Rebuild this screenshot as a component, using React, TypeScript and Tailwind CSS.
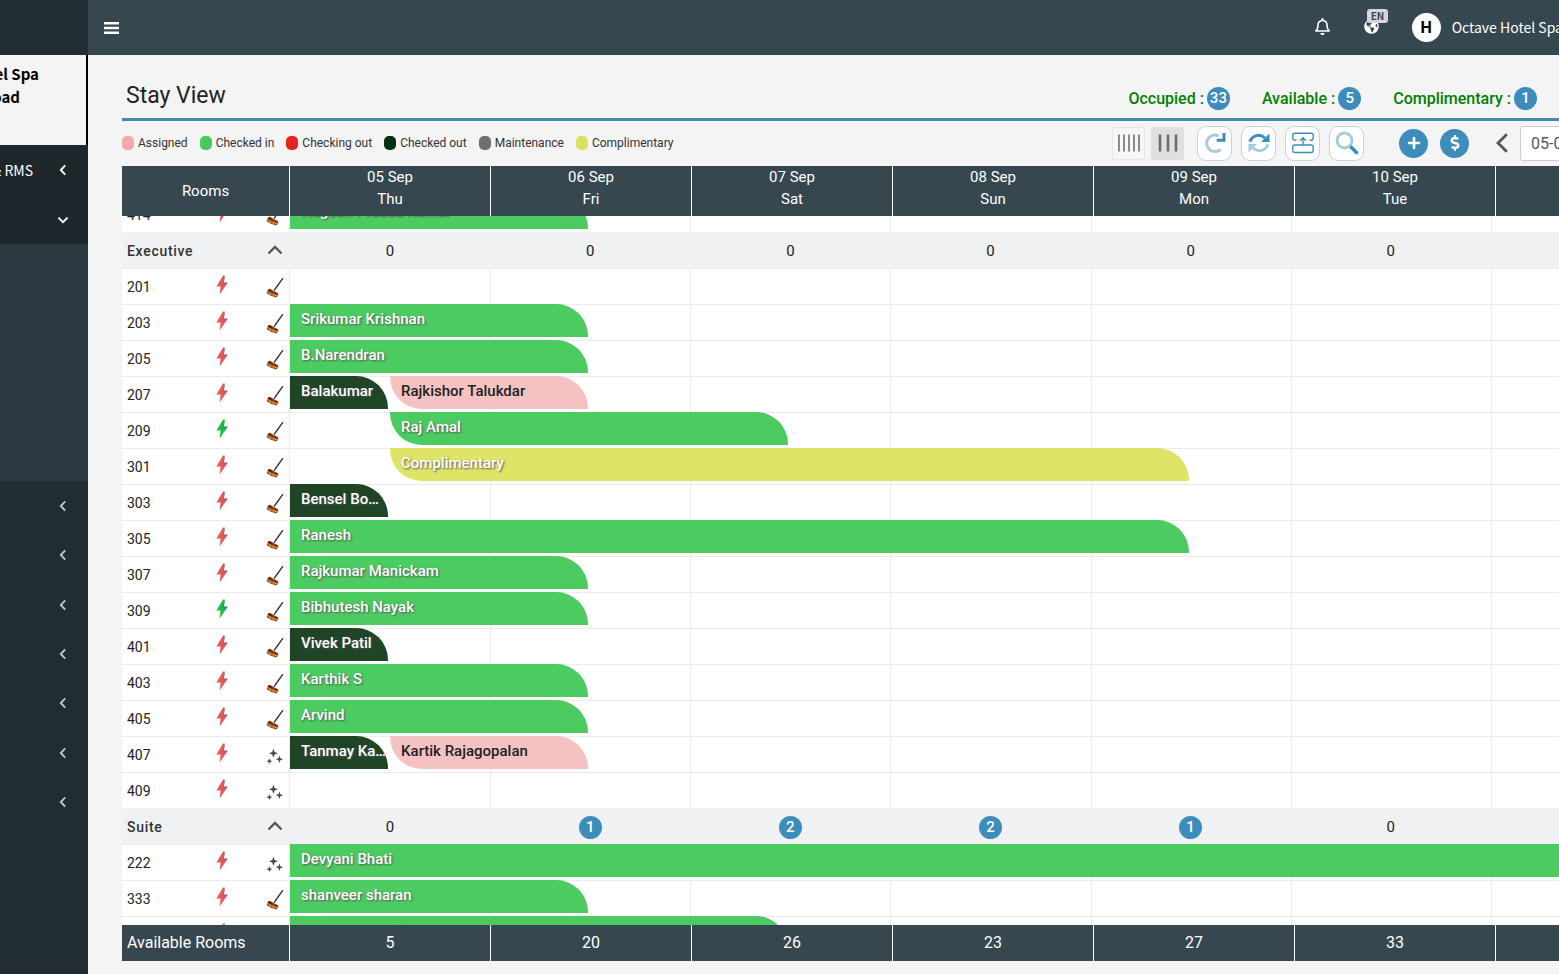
import type { ReactNode } from "react";
import { FaDollarSign, FaGlobeAmericas, FaPlus, FaRegBell } from "react-icons/fa";

type Kind = "in" | "out" | "assigned" | "comp";
type Stay = { name: string; from: number; to: number; kind: Kind };
type Room = { no: string; power?: boolean; clean?: boolean; stays: Stay[] };

const sans = "font-['Noto_Sans_CJK_SC',sans-serif]";

const days = [
  ["05 Sep", "Thu"],
  ["06 Sep", "Fri"],
  ["07 Sep", "Sat"],
  ["08 Sep", "Sun"],
  ["09 Sep", "Mon"],
  ["10 Sep", "Tue"],
  ["11 Sep", "Wed"],
];

const available = [5, 20, 26, 23, 27, 33, 33];

const legend = [
  ["Assigned", "bg-[#f2a9a9]"],
  ["Checked in", "bg-[#4bc95e]"],
  ["Checking out", "bg-[#e62323]"],
  ["Checked out", "bg-[#04300b]"],
  ["Maintenance", "bg-[#6f6f6f]"],
  ["Complimentary", "bg-[#dbe163]"],
];

const kinds: Record<Kind, string> = {
  in: "bg-[#32c44a]/88 text-white [text-shadow:1px_1px_2px_#555]",
  out: "bg-[#002a08]/88 text-white [text-shadow:1px_1px_2px_#555]",
  assigned: "bg-[#f4b9b9]/88 text-[#222]",
  comp: "bg-[#d8e052]/88 text-white [text-shadow:1px_1px_2px_#555]",
};

/* from / to are counted in half days from the start of the first column */
const topRooms: Room[] = [
  { no: "414", stays: [{ name: "Nagesh Prasad Kumar", from: 0, to: 3, kind: "in" }] },
];

const executive: Room[] = [
  { no: "201", stays: [] },
  { no: "203", stays: [{ name: "Srikumar Krishnan", from: 0, to: 3, kind: "in" }] },
  { no: "205", stays: [{ name: "B.Narendran", from: 0, to: 3, kind: "in" }] },
  {
    no: "207",
    stays: [
      { name: "Balakumar", from: 0, to: 1, kind: "out" },
      { name: "Rajkishor Talukdar", from: 1, to: 3, kind: "assigned" },
    ],
  },
  { no: "209", power: true, stays: [{ name: "Raj Amal", from: 1, to: 5, kind: "in" }] },
  { no: "301", stays: [{ name: "Complimentary", from: 1, to: 9, kind: "comp" }] },
  { no: "303", stays: [{ name: "Bensel Bowman", from: 0, to: 1, kind: "out" }] },
  { no: "305", stays: [{ name: "Ranesh", from: 0, to: 9, kind: "in" }] },
  { no: "307", stays: [{ name: "Rajkumar Manickam", from: 0, to: 3, kind: "in" }] },
  { no: "309", power: true, stays: [{ name: "Bibhutesh Nayak", from: 0, to: 3, kind: "in" }] },
  { no: "401", stays: [{ name: "Vivek Patil", from: 0, to: 1, kind: "out" }] },
  { no: "403", stays: [{ name: "Karthik S", from: 0, to: 3, kind: "in" }] },
  { no: "405", stays: [{ name: "Arvind", from: 0, to: 3, kind: "in" }] },
  {
    no: "407",
    clean: true,
    stays: [
      { name: "Tanmay Kamble", from: 0, to: 1, kind: "out" },
      { name: "Kartik Rajagopalan", from: 1, to: 3, kind: "assigned" },
    ],
  },
  { no: "409", clean: true, stays: [] },
];

const suite: Room[] = [
  { no: "222", clean: true, stays: [{ name: "Devyani Bhati", from: 0, to: 14, kind: "in" }] },
  { no: "333", stays: [{ name: "shanveer sharan", from: 0, to: 3, kind: "in" }] },
  { no: "444", stays: [{ name: "mohamed sadik", from: 0, to: 5, kind: "in" }] },
];

function Bolt({ on }: { on?: boolean }) {
  return (
    <svg viewBox="0 0 12 20" className="h-5 w-3" aria-hidden="true">
      <path d="M7 .6 .4 11.600h4.200L3.600 19.400 11.800 7.400H7.900L8.900 .6z" fill={on ? "#1fbd43" : "#e25b5c"} />
      <path d="M8.900 .6 7.900 7.400 11.800 7.400 8.800 12 8.900 9.400 6 9.400z" fill={on ? "#128a5a" : "#b0565f"} opacity=".5" />
    </svg>
  );
}

function Broom() {
  return (
    <svg viewBox="0 0 18 20" className="h-5 w-[18px]" aria-hidden="true">
      <path d="M16.600 .6 8.400 12" stroke="#3a2c2c" strokeWidth="1.300" strokeLinecap="round" />
      <path d="M1.600 12 3.600 11 12 15.600 12.400 18 10.400 19.600 5 18 .6 15.200z" fill="#c98a3c" />
      <path d="M1.600 12 3.600 10.800 12.200 15.400 11.800 17 7 15.600 2.400 13.600z" fill="#74230f" />
      <path d="M1 14.600 3 15.900M4.600 16.700 6.600 17.700M8.200 18 10.200 18.800" stroke="#4a3016" strokeWidth=".9" />
      <path d="M6.400 13.300 9.600 15" stroke="#cc4a2c" strokeWidth="1" />
    </svg>
  );
}

function Sparkles() {
  return (
    <svg viewBox="0 0 18 20" className="h-5 w-[18px]" fill="#4b4b4f" aria-hidden="true">
      <path d="M7.400 2.800 8.600 6.100 11.800 7.200 8.600 8.400 7.400 11.700 6.200 8.400 3 7.200 6.200 6.100z" />
      <path d="M13.400 9.600 14.400 12.300 17 13.200 14.400 14.200 13.400 16.900 12.400 14.200 9.800 13.200 12.400 12.300z" />
      <path d="M3.400 12.200 4.200 14.300 6.400 15.200 4.200 16 3.400 18.200 2.600 16 .4 15.200 2.600 14.300z" />
    </svg>
  );
}

function ChevronUp() {
  return (
    <svg viewBox="0 0 16 10" className="h-[10px] w-4" fill="none" stroke="#55585b" strokeWidth="2.400" aria-hidden="true">
      <path d="M1.500 8.500 8 2l6.500 6.500" />
    </svg>
  );
}

function MenuArrow({ open }: { open?: boolean }) {
  return (
    <svg viewBox="0 0 12 12" className="size-3 shrink-0" fill="none" stroke="currentColor" strokeWidth="1.900" aria-hidden="true">
      <path d={open ? "M1.400 3.600 6 8.200l4.600-4.600" : "M8.200 1.400 3.800 6l4.400 4.600"} />
    </svg>
  );
}

function RoomRow({ room, className = "" }: { room: Room; className?: string }) {
  return (
    <tr className={`flex h-9 shrink-0 ${className}`}>
      <th
        scope="row"
        className="flex w-[168px] shrink-0 items-center border-t border-r border-[#ececec] pl-[5px] text-left text-sm font-normal text-[#222]"
      >
        <span className="w-[89px]">{room.no}</span>
        <span className="w-[50px] pb-1">
          <Bolt on={room.power} />
        </span>
        <span className="pt-[2px]">{room.clean ? <Sparkles /> : <Broom />}</span>
      </th>
      <td colSpan={7} className="grid w-[1401px] shrink-0 grid-cols-14 grid-rows-[36px]">
        {days.map((d, i) => (
          <span
            key={d[0]}
            className={`row-start-1 border-t border-[#ececec] ${i > 0 ? "border-l" : ""}`}
            style={{ gridColumn: `${i * 2 + 1} / span 2` }}
          />
        ))}
        {room.stays.map((s) => (
          <a
            key={s.name}
            href="#stay"
            className={`z-10 row-start-1 mr-[2px] h-[33px] min-w-0 truncate rounded-tr-[32px] pt-[5px] pl-[11px] text-[15px] leading-5 font-medium ${s.from > 0 ? "rounded-bl-[32px]" : ""} ${kinds[s.kind]}`}
            style={{ gridColumn: `${s.from + 1} / ${s.to + 1}` }}
          >
            {s.name}
          </a>
        ))}
      </td>
    </tr>
  );
}

function Badge({ children }: { children: ReactNode }) {
  return (
    <span className="inline-flex size-[23px] items-center justify-center rounded-full bg-[#3c8dbc] text-[15px] leading-none font-medium text-white">
      {children}
    </span>
  );
}

function GroupRow({ name, counts }: { name: string; counts: number[] }) {
  return (
    <tr className="flex h-9 shrink-0 bg-[#eff1f3]">
      <th scope="row" className="flex w-[168px] shrink-0 items-center justify-between pr-[7px] pl-[5px] text-left">
        <span className="pt-[2px] text-sm font-medium tracking-wider text-[#333]">{name}</span>
        <button type="button" aria-label={`Collapse ${name}`}>
          <ChevronUp />
        </button>
      </th>
      <td colSpan={7} className="grid w-[1401px] shrink-0 grid-cols-7 items-center pt-[2px] text-[15px] text-[#222]">
        {counts.map((c, i) => (
          <span key={i} className="flex justify-center">
            {c > 0 ? <Badge>{c}</Badge> : c}
          </span>
        ))}
      </td>
    </tr>
  );
}

function StayTable() {
  return (
    <table className="flex min-h-0 flex-1 flex-col overflow-hidden bg-white">
      <thead className="block shrink-0 bg-[#36474f] text-[15px] text-white">
        <tr className="flex h-[50px]">
          <th scope="col" className="flex w-[168px] shrink-0 items-center justify-center border-r border-white font-normal">
            Rooms
          </th>
          {days.map(([date, day]) => (
            <th key={date} scope="col" className="w-[201px] shrink-0 border-r border-white text-center leading-[22px] font-normal">
              {date}
              <br />
              {day}
            </th>
          ))}
        </tr>
      </thead>
      <tbody className="flex min-h-0 flex-1 flex-col overflow-hidden">
        {topRooms.map((r) => (
          <RoomRow key={r.no} room={r} className="-mt-5" />
        ))}
        <GroupRow name="Executive" counts={[0, 0, 0, 0, 0, 0, 0]} />
        {executive.map((r) => (
          <RoomRow key={r.no} room={r} />
        ))}
        <GroupRow name="Suite" counts={[0, 1, 2, 2, 1, 0, 0]} />
        {suite.map((r) => (
          <RoomRow key={r.no} room={r} />
        ))}
      </tbody>
      <tfoot className="z-20 block shrink-0 bg-[#36474f] text-base text-white">
        <tr className="flex h-9">
          <th scope="row" className="flex w-[168px] shrink-0 items-center border-r border-white pl-[5px] font-normal">
            Available Rooms
          </th>
          {available.map((n, i) => (
            <td key={i} className="flex w-[201px] shrink-0 items-center justify-center border-r border-white">
              {n}
            </td>
          ))}
        </tr>
      </tfoot>
    </table>
  );
}

function Sidebar() {
  return (
    <aside className={`flex w-[88px] shrink-0 flex-col overflow-hidden bg-[#222d32] text-white ${sans}`}>
      <div className="h-[55px] shrink-0" />
      <div className="flex h-[90px] shrink-0 flex-col border-r-2 border-black bg-[#f4f4f4] pt-[7px] text-[15px] leading-[23px] font-bold whitespace-nowrap text-black">
        <span className="flex justify-end pr-[47px]">Octave Hotel Spa</span>
        <span className="flex justify-end pr-[66px]">Road</span>
      </div>
      <nav aria-label="Main" className="flex flex-col">
        <a href="#rms" className="flex h-[50px] items-center justify-end gap-6 bg-[#1e282c] pr-[19px] text-sm whitespace-nowrap">
          &amp; RMS
          <MenuArrow />
        </a>
        <a href="#front-desk" aria-label="Front desk" className="flex h-[49px] items-center justify-end bg-[#1e282c] pr-[19px]">
          <MenuArrow open />
        </a>
        <div className="h-[237px] bg-[#2c3b41]" />
        <div className="grid h-[346px] grid-rows-7 text-[#b8c7ce]">
          {["Reservations", "Rates", "Guests", "Housekeeping", "Reports", "Accounts", "Settings"].map((n) => (
            <a key={n} href="#menu" aria-label={n} className="flex items-center justify-end pr-[19px]">
              <MenuArrow />
            </a>
          ))}
        </div>
      </nav>
    </aside>
  );
}

function TopBar() {
  return (
    <header className={`flex h-[55px] shrink-0 items-center bg-[#36474f] text-white ${sans}`}>
      <button type="button" aria-label="Toggle menu" className="ml-4">
        <svg viewBox="0 0 15 12" className="h-3 w-[15px]" fill="#fff" aria-hidden="true">
          <path d="M0 0h15v2.600H0zM0 4.700h15v2.600H0zM0 9.400h15V12H0z" />
        </svg>
      </button>
      <div className="-mr-[6px] ml-auto flex items-center whitespace-nowrap">
        <button type="button" aria-label="Notifications" className="mr-[33px] pb-[2px]">
          <FaRegBell size={17} />
        </button>
        <button type="button" aria-label="Language" className="relative mr-[33px] pb-[2px]">
          <FaGlobeAmericas size={15} />
          <span className="absolute -top-[10px] left-[3px] rounded-[3px] bg-[#d2d6de] px-1 text-[10px] leading-[14px] font-bold text-[#444]">
            EN
          </span>
        </button>
        <span className="mr-[11px] flex size-[29px] items-center justify-center rounded-full bg-white font-['Roboto',sans-serif] text-base font-bold text-black">
          H
        </span>
        <span className="pr-[2px] pb-[2px] text-sm">Octave Hotel Spa</span>
      </div>
    </header>
  );
}

const toolButton =
  "flex size-[35px] shrink-0 items-center justify-center rounded-[9px] border border-[#ccd0d8] bg-white";

function Toolbar() {
  return (
    <div className="flex h-[45px] shrink-0 items-center justify-between">
      <ul className="flex items-center gap-3 pb-[2px] text-xs text-[#333]">
        {legend.map(([label, color]) => (
          <li key={label} className="flex items-center gap-1">
            <span className={`h-[14px] w-3 rounded-[5px] ${color}`} />
            {label}
          </li>
        ))}
      </ul>
      <div className="-mr-[71px] flex items-center pb-px">
        <button type="button" aria-label="Compact columns" className="flex size-[33px] items-center justify-center rounded-[3px] border border-[#e6e6e8] bg-[#f6f6f6]">
          <svg viewBox="0 0 22 18" className="h-[18px] w-[22px]" stroke="#77787c" strokeWidth="1.700" aria-hidden="true">
            <path d="M1 .5v17M6 .5v17M11 .5v17M16 .5v17M21 .5v17" />
          </svg>
        </button>
        <button type="button" aria-label="Wide columns" className="ml-[6px] flex size-[33px] items-center justify-center rounded-[3px] bg-[#dfdfe1]">
          <svg viewBox="0 0 20 18" className="h-[18px] w-5" stroke="#6d6d70" strokeWidth="2.600" aria-hidden="true">
            <path d="M2 .5v17M10 .5v17M18 .5v17" />
          </svg>
        </button>
        <div className="ml-[13px] flex gap-[9px]">
          <button type="button" aria-label="Redo" className={toolButton}>
            <svg viewBox="0 0 22 22" className="size-[22px]" fill="none" strokeWidth="3" aria-hidden="true">
              <path d="M16.600 17.400A8.300 8.300 0 1 1 14.500 3.800" stroke="#a6cbe0" />
              <path d="M20 1v7.300h-7.300" stroke="#3c8dbc" />
            </svg>
          </button>
          <button type="button" aria-label="Refresh" className={toolButton}>
            <svg viewBox="0 0 22 22" className="size-[22px]" fill="none" strokeWidth="3" aria-hidden="true">
              <path d="M2 9.600C4 3 12 1.400 17 6" stroke="#3c8dbc" />
              <path d="M21.500 1.500v8.500h-8.500z" fill="#3c8dbc" />
              <path d="M20 12.400C18 19 10 20.600 5 16" stroke="#a6cbe0" />
              <path d="M.5 20.500v-8.500H9z" fill="#a6cbe0" />
            </svg>
          </button>
          <button type="button" aria-label="Assign room" className={toolButton}>
            <svg viewBox="0 0 22 22" className="size-[22px]" fill="none" stroke="#3c8dbc" strokeWidth="1.400" aria-hidden="true">
              <path d="M4.500 8.300H3.200Q.8 8.300 .8 6V3.300Q.8 1.300 2.800 1.300H19.200Q21.200 1.300 21.200 3.300V6Q21.200 8.300 18.800 8.300H17.500" />
              <rect x=".8" y="13" width="20.400" height="7.500" rx="2" />
              <path d="M11 13V6M8 8.800l3-3 3 3" />
            </svg>
          </button>
          <button type="button" aria-label="Search" className={toolButton}>
            <svg viewBox="0 0 24 24" className="size-6" fill="none" strokeWidth="3" aria-hidden="true">
              <circle cx="9.500" cy="9.500" r="7.500" stroke="#a6cbe0" />
              <path d="M16.500 16.500l5 5" stroke="#3c8dbc" strokeWidth="3.600" strokeLinecap="round" />
            </svg>
          </button>
        </div>
        <div className="ml-[35px] flex gap-3 text-white">
          <button type="button" aria-label="Add booking" className="flex size-[29px] items-center justify-center rounded-full bg-[#3c8dbc]">
            <FaPlus size={14} />
          </button>
          <button type="button" aria-label="Payments" className="flex size-[29px] items-center justify-center rounded-full bg-[#3c8dbc]">
            <FaDollarSign size={16} />
          </button>
        </div>
        <button type="button" aria-label="Previous days" className="mr-3 ml-[27px]">
          <svg viewBox="0 0 12 20" className="h-5 w-3" fill="none" stroke="#555" strokeWidth="2.800" aria-hidden="true">
            <path d="M10.800 1.200 2 10l8.800 8.800" />
          </svg>
        </button>
        <input
          aria-label="Start date"
          defaultValue="05-09-2024"
          className="h-[35px] w-[110px] rounded-[3px] border border-[#ccc] bg-white pl-[10px] text-base text-[#555]"
        />
      </div>
    </div>
  );
}

export default function App() {
  return (
    <div className="flex h-screen overflow-hidden bg-[#f4f4f4] font-['Roboto',sans-serif]">
      <Sidebar />
      <div className="flex min-w-0 flex-1 flex-col overflow-hidden">
        <TopBar />
        <main className="flex min-h-0 flex-1 flex-col pb-[13px] pl-[34px]">
          <div className="flex h-[66px] shrink-0 items-center justify-between border-b-3 border-[#4788ad] pt-[19px] pr-[22px] pl-1">
            <h1 className="text-[23px] text-[#222]">Stay View</h1>
            <dl className="flex gap-8 pt-[5px] text-base font-medium text-[#008000]">
              {[
                ["Occupied", 33],
                ["Available", 5],
                ["Complimentary", 1],
              ].map(([k, v]) => (
                <div key={k} className="flex items-center gap-[3px]">
                  <dt>{k} :</dt>
                  <dd className="flex">
                    <Badge>{v}</Badge>
                  </dd>
                </div>
              ))}
            </dl>
          </div>
          <Toolbar />
          <StayTable />
        </main>
      </div>
    </div>
  );
}
